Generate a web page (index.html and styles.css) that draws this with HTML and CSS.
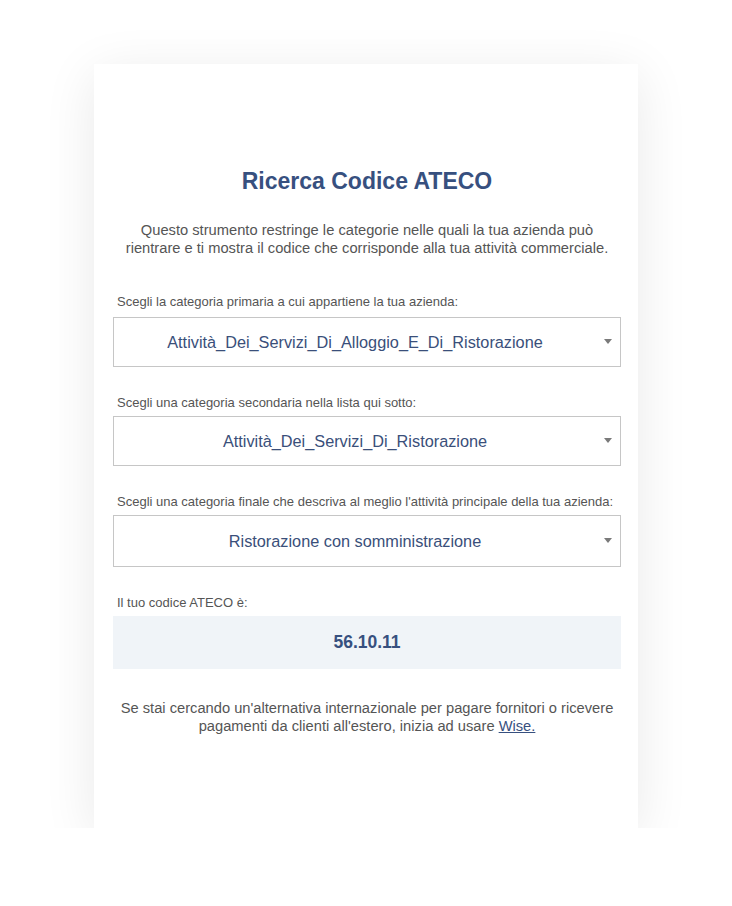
FILE: index.html
```html
<!DOCTYPE html>
<html lang="it">
<head>
<meta charset="utf-8">
<title>Ricerca Codice ATECO</title>
<link rel="stylesheet" href="styles.css">
</head>
<body>
<div class="card">
  <h1 class="title">Ricerca Codice ATECO</h1>
  <p class="desc">Questo strumento restringe le categorie nelle quali la tua azienda può<br>rientrare e ti mostra il codice che corrisponde alla tua attività commerciale.</p>

  <div class="field field-first">
    <div class="label">Scegli la categoria primaria a cui appartiene la tua azienda:</div>
    <div class="select"><span class="select-text">Attività_Dei_Servizi_Di_Alloggio_E_Di_Ristorazione</span><span class="arrow"></span></div>
  </div>

  <div class="field">
    <div class="label">Scegli una categoria secondaria nella lista qui sotto:</div>
    <div class="select"><span class="select-text">Attività_Dei_Servizi_Di_Ristorazione</span><span class="arrow"></span></div>
  </div>

  <div class="field">
    <div class="label">Scegli una categoria finale che descriva al meglio l'attività principale della tua azienda:</div>
    <div class="select select-tall"><span class="select-text">Ristorazione con somministrazione</span><span class="arrow"></span></div>
  </div>

  <div class="field">
    <div class="label">Il tuo codice ATECO è:</div>
    <div class="result">56.10.11</div>
  </div>

  <p class="footer">Se stai cercando un'alternativa internazionale per pagare fornitori o ricevere<br>pagamenti da clienti all'estero, inizia ad usare <a href="#" class="link">Wise.</a></p>
</div>
</body>
</html>
```

FILE: styles.css
```css
html, body {
  margin: 0;
  padding: 0;
  background: #ffffff;
}
body {
  font-family: "Liberation Sans", Arial, sans-serif;
  padding-top: 64px;
}
.card {
  width: 544px;
  height: 764px;
  box-sizing: border-box;
  margin: 0 auto;
  padding: 104px 17px 0 19px;
  background: #ffffff;
  box-shadow: 0 10px 50px rgba(0, 0, 0, 0.09);
}
.title {
  margin: 0;
  font-size: 23px;
  line-height: 26px;
  font-weight: bold;
  color: #37507f;
  text-align: center;
}
.desc {
  margin: 27px 0 0;
  font-size: 14.7px;
  line-height: 18px;
  color: #555555;
  text-align: center;
}
.field {
  margin-top: 28px;
}
.field-first {
  margin-top: 37px;
}
.label {
  font-size: 13px;
  line-height: 16px;
  color: #555555;
  margin-bottom: 5px;
  padding-left: 4px;
}
.field-first .label {
  margin-bottom: 7px;
}
.select {
  height: 50px;
  box-sizing: border-box;
  border: 1px solid #c6c6c6;
  display: flex;
  align-items: center;
  position: relative;
  padding-right: 24px;
}
.select-tall {
  height: 52px;
}
.select-text {
  flex: 1;
  text-align: center;
  font-size: 16.3px;
  color: #3a4f7a;
}
.arrow {
  position: absolute;
  right: 8px;
  top: 50%;
  margin-top: -3px;
  width: 0;
  height: 0;
  border-left: 4.5px solid transparent;
  border-right: 4.5px solid transparent;
  border-top: 5px solid #7a7a7a;
}
.result {
  height: 53px;
  background: #f0f4f8;
  display: flex;
  align-items: center;
  justify-content: center;
  font-size: 17.5px;
  font-weight: bold;
  color: #37507f;
}
.footer {
  margin: 30px 0 0;
  font-size: 14.7px;
  line-height: 18px;
  color: #555555;
  text-align: center;
}
.link {
  color: #37507f;
  text-decoration: underline;
}
```
